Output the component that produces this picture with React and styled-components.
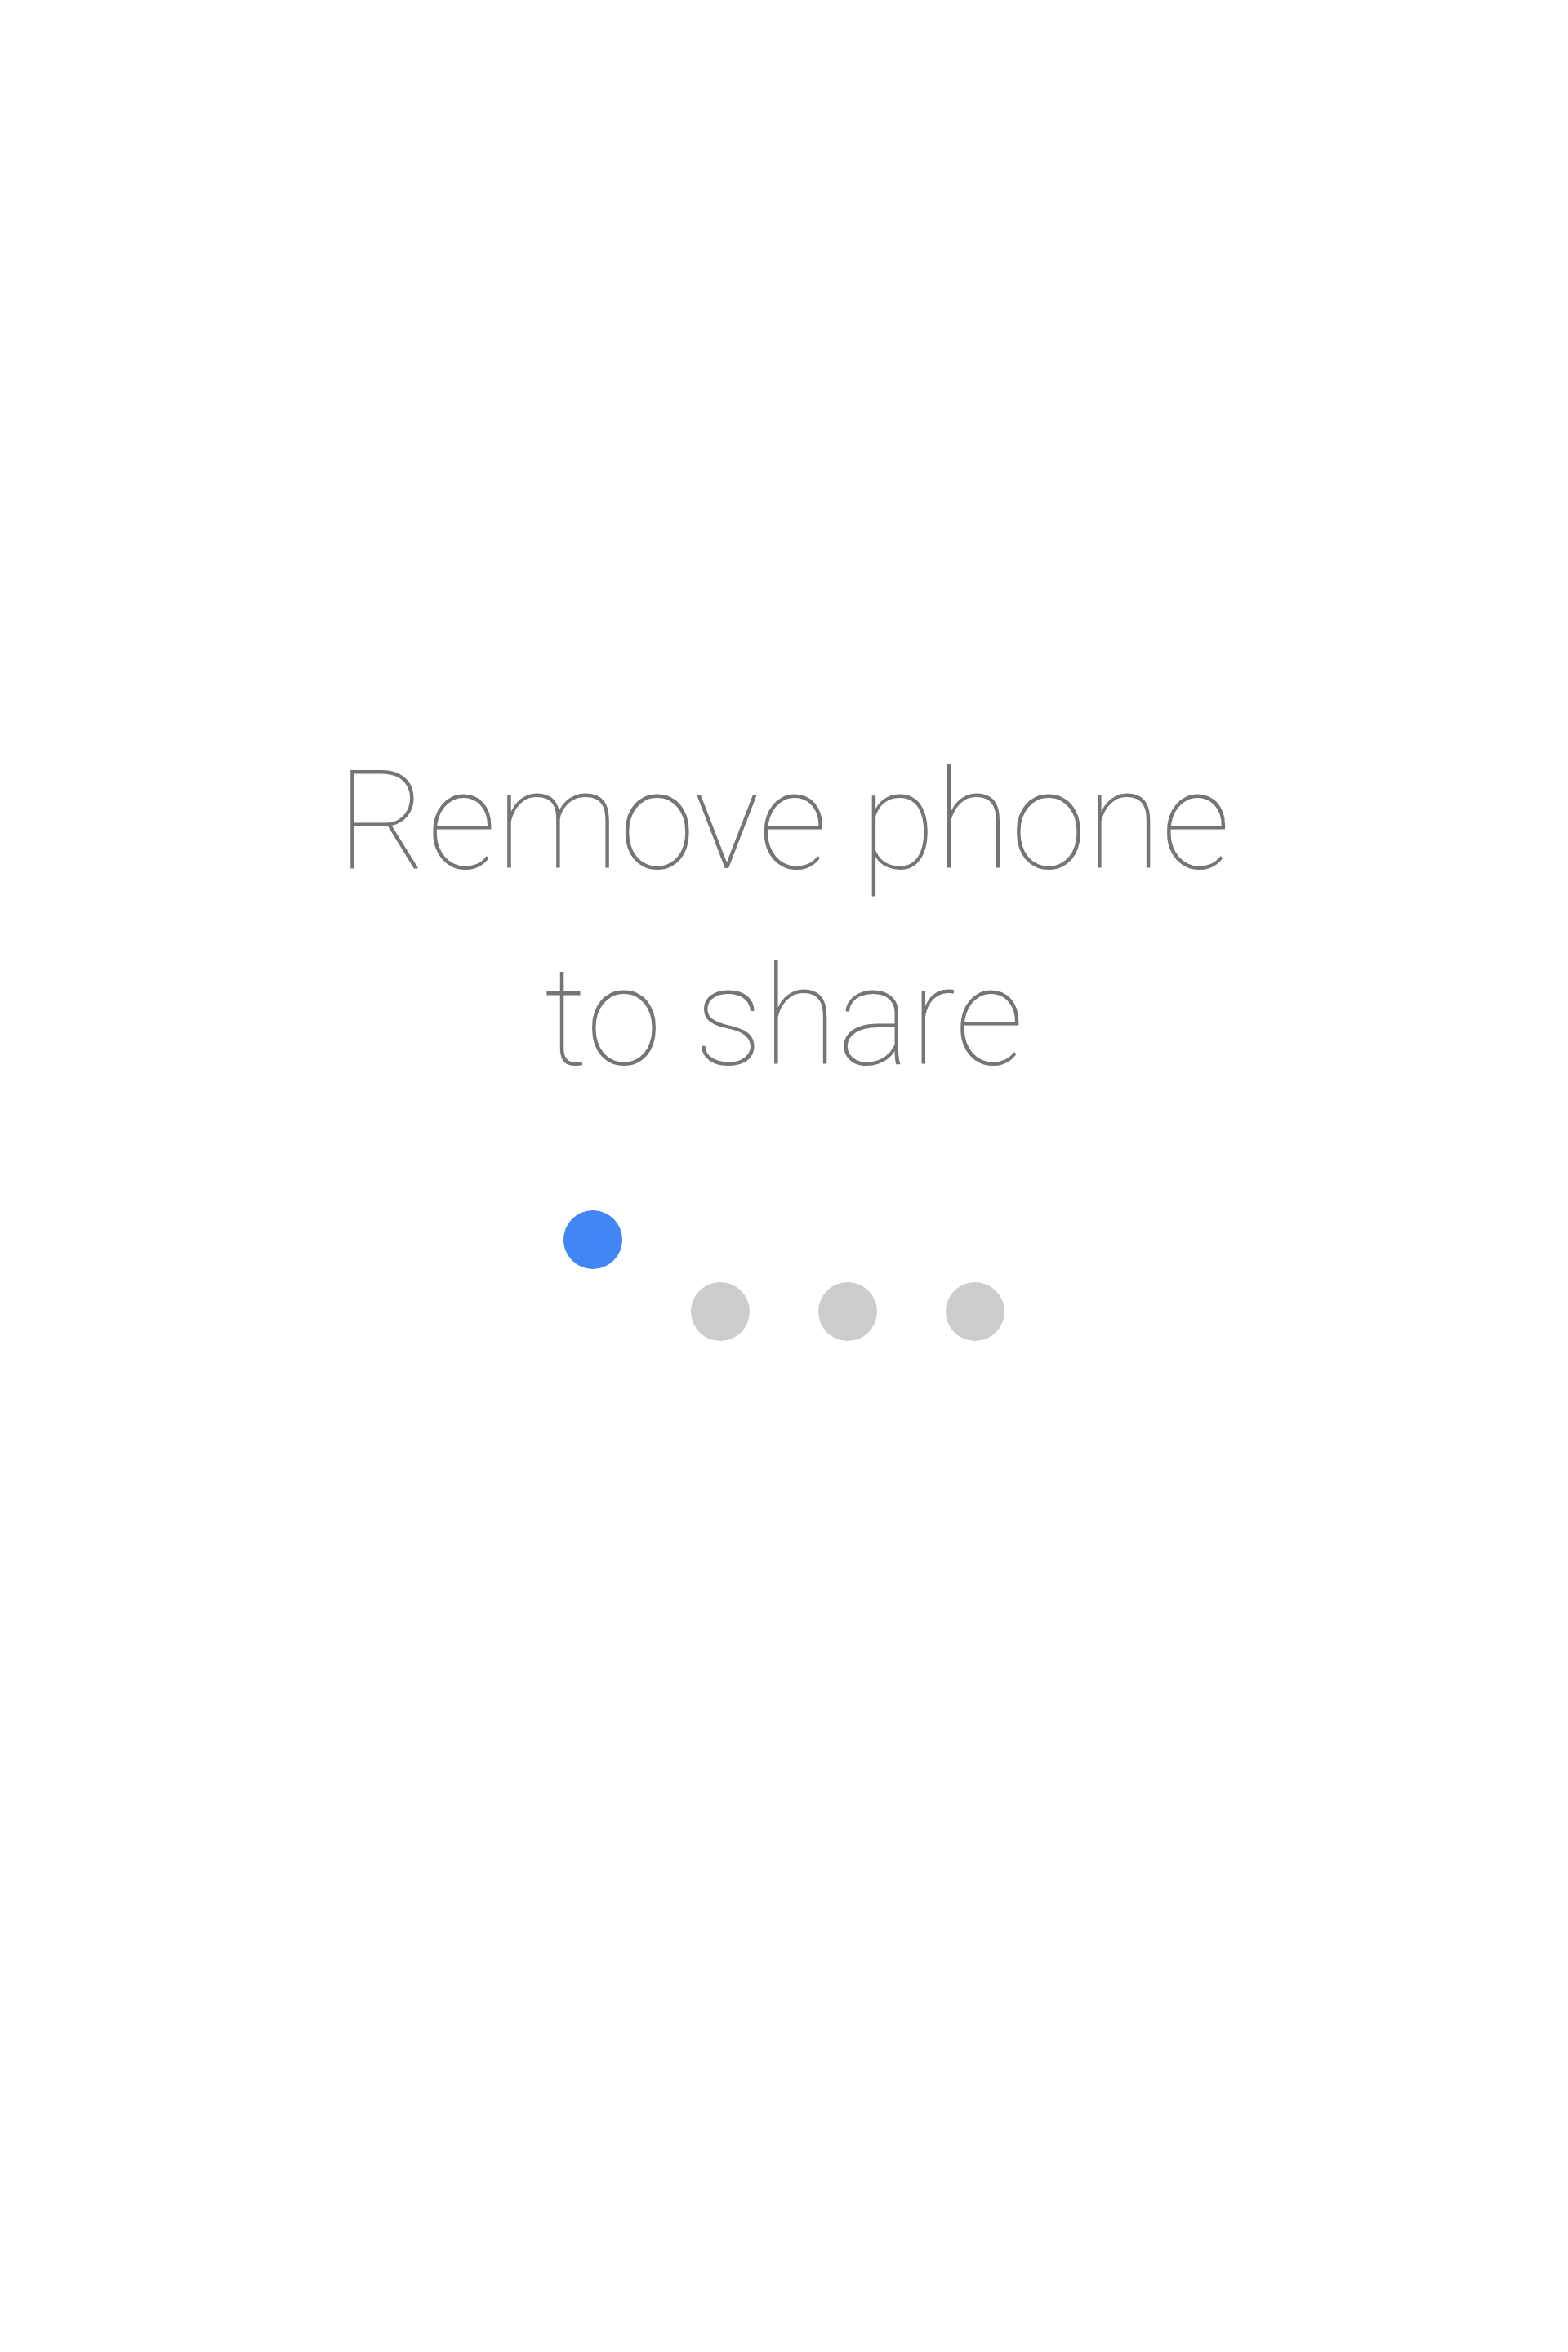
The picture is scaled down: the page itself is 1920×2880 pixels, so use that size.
import React from "react";
import styled, { createGlobalStyle } from "styled-components";

const GlobalStyle = createGlobalStyle`
  html, body {
    margin: 0;
    padding: 0;
    background: #ffffff;
  }
`;

const Screen = styled.div`
  width: 1920px;
  height: 2880px;
  display: flex;
  flex-direction: column;
  align-items: center;
  padding-top: 886px;
  box-sizing: border-box;
  background: #ffffff;
`;

const Message = styled.h1`
  margin: 0;
  font-family: Roboto, "Noto Sans", sans-serif;
  font-weight: 100;
  font-size: 168px;
  line-height: 240px;
  color: #757575;
  text-align: center;
`;

const Dots = styled.div`
  display: flex;
  gap: 84px;
  margin-top: 204px;
`;

const Dot = styled.span`
  width: 72px;
  height: 72px;
  border-radius: 50%;
  background: ${(p) => (p.active ? "#4285f4" : "#cccccc")};
  transform: ${(p) => (p.active ? "translateY(-88px)" : "none")};
`;

export default function App() {
  return (
    <>
      <GlobalStyle />
      <Screen>
        <Message>
          Remove phone
          <br />
          to share
        </Message>
        <Dots>
          <Dot active />
          <Dot />
          <Dot />
          <Dot />
        </Dots>
      </Screen>
    </>
  );
}
